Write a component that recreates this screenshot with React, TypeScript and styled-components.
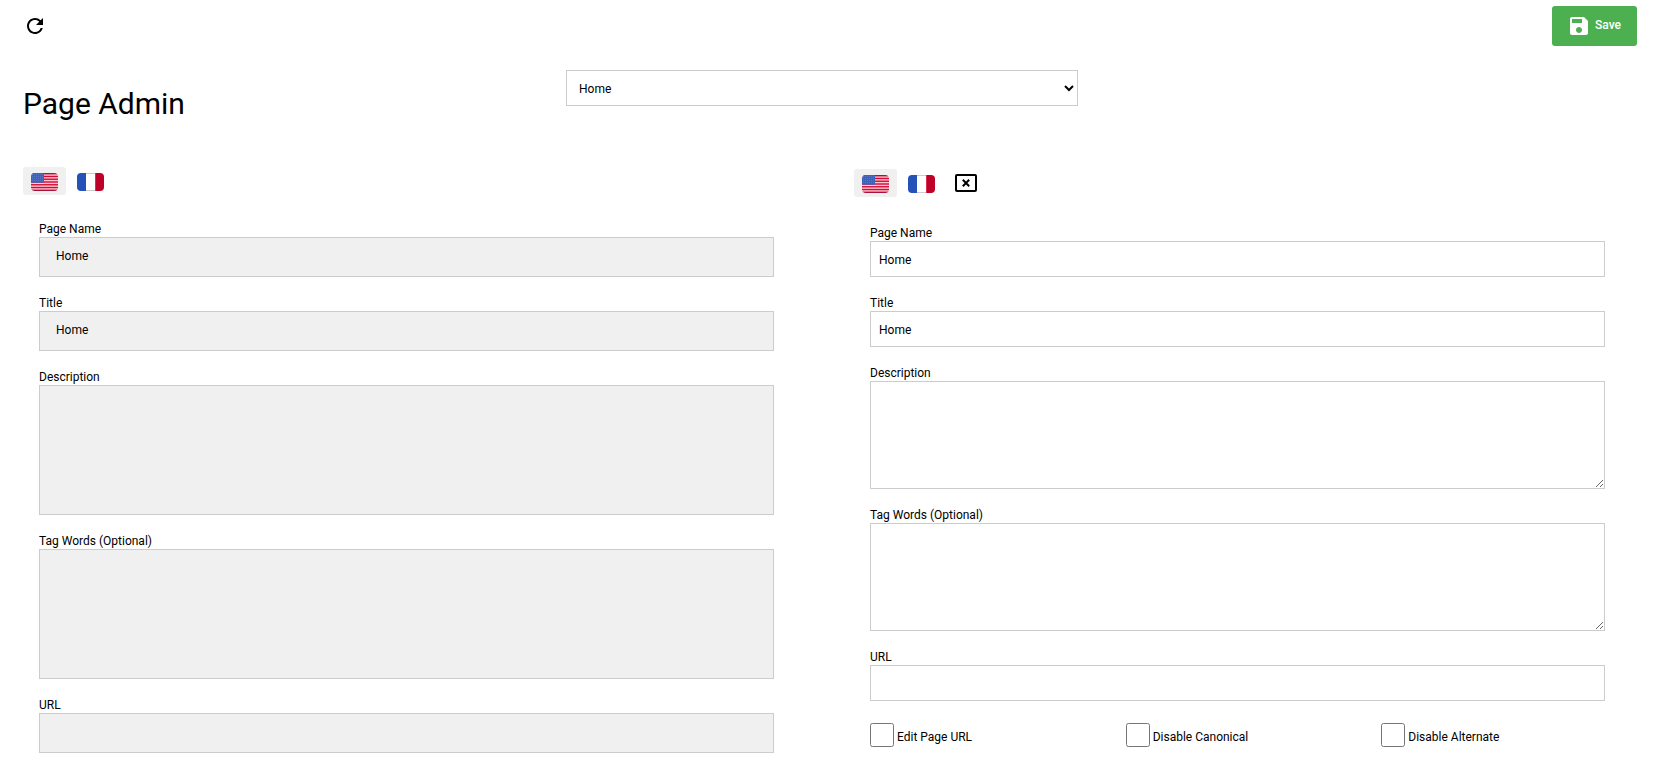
import * as React from "react";
import styled, { createGlobalStyle } from "styled-components";
import { MdRefresh, MdSave } from "react-icons/md";

const FIELDS = [
  { id: "name", label: "Page Name", value: "Home", multiline: false },
  { id: "title", label: "Title", value: "Home", multiline: false },
  { id: "description", label: "Description", value: "", multiline: true },
  { id: "tags", label: "Tag Words (Optional)", value: "", multiline: true },
  { id: "url", label: "URL", value: "", multiline: false },
];

const OPTIONS = [
  { id: "editUrl", label: "Edit Page URL" },
  { id: "canonical", label: "Disable Canonical" },
  { id: "alternate", label: "Disable Alternate" },
];

const FlagUS = () => (
  <svg width="27" height="18" viewBox="0 0 27 18" aria-hidden="true">
    <clipPath id="us">
      <rect width="27" height="18" rx="4" />
    </clipPath>
    <g clipPath="url(#us)">
      <rect width="27" height="18" fill="#ffc4cf" />
      {[0, 1, 2, 3, 4, 5, 6].map((i) => (
        <rect
          key={i}
          y={(i * 36) / 13}
          width="27"
          height={18 / 13}
          fill={i % 6 === 0 ? "#a8123a" : "#d00c34"}
        />
      ))}
      <rect width="13" height="9.7" fill="#3d62b8" />
      {[1.5, 3.5, 5.5, 7.5].map((y) => (
        <path
          key={y}
          d={`M1 ${y}H13`}
          stroke="#5f7fca"
          strokeWidth="0.7"
          strokeDasharray="1 1"
        />
      ))}
    </g>
  </svg>
);

const FlagFR = () => (
  <svg width="27" height="18" viewBox="0 0 27 18" aria-hidden="true">
    <clipPath id="fr">
      <rect width="27" height="18" rx="4" />
    </clipPath>
    <g clipPath="url(#fr)">
      <rect width="27" height="18" fill="#fff" />
      <path d="M9 .5H18M9 17.5H18" stroke="#ccc" />
      <rect width="9" height="18" fill="#2552b8" />
      <rect x="18" width="9" height="18" fill="#bf0029" />
      <path d="M18.5 0V18" stroke="#dc2f50" />
    </g>
  </svg>
);

const CloseBox = () => (
  <svg width="22" height="18" viewBox="0 0 22 18" aria-hidden="true">
    <rect
      x="1"
      y="1"
      width="20"
      height="16"
      rx="1"
      fill="none"
      stroke="#000"
      strokeWidth="2"
    />
    <path d="M7.8 5.8L14.2 12.2M14.2 5.8L7.8 12.2" stroke="#000" strokeWidth="2" />
  </svg>
);

const Languages = () => (
  <>
    <LangButton type="button" aria-label="English" $active>
      <FlagUS />
    </LangButton>
    <LangButton type="button" aria-label="French">
      <FlagFR />
    </LangButton>
  </>
);

const App: React.FunctionComponent = () => {
  return (
    <>
      <GlobalStyle />
      <Toolbar>
        <RefreshButton type="button" aria-label="Refresh">
          <MdRefresh size={24} />
        </RefreshButton>
        <SaveButton type="button">
          <MdSave size={24} />
          <SaveText>Save</SaveText>
        </SaveButton>
      </Toolbar>

      <Header>
        <Heading>Page Admin</Heading>
        <PageSelect aria-label="Page" defaultValue="Home">
          <option>Home</option>
        </PageSelect>
      </Header>

      <Columns>
        <section>
          <LangBar>
            <Languages />
          </LangBar>
          <Fields>
            {FIELDS.map(({ id, label, value, multiline }) => (
              <Field key={id}>
                <Label as="span" id={`current-${id}`}>
                  {label}
                </Label>
                <ReadOnly $tall={multiline} aria-labelledby={`current-${id}`}>
                  {value}
                </ReadOnly>
              </Field>
            ))}
          </Fields>
        </section>

        <section>
          <LangBar $editing>
            <Languages />
            <CloseButton type="button" aria-label="Close">
              <CloseBox />
            </CloseButton>
          </LangBar>
          <Fields>
            {FIELDS.map(({ id, label, value, multiline }) => (
              <Field key={id}>
                <Label htmlFor={id}>{label}</Label>
                {multiline ? (
                  <TextArea id={id} defaultValue={value} />
                ) : (
                  <TextInput id={id} type="text" defaultValue={value} />
                )}
              </Field>
            ))}
          </Fields>
          <Options>
            {OPTIONS.map(({ id, label }) => (
              <Option key={id}>
                <Checkbox id={id} type="checkbox" />
                <OptionLabel htmlFor={id}>{label}</OptionLabel>
              </Option>
            ))}
          </Options>
        </section>
      </Columns>
    </>
  );
};

const GlobalStyle = createGlobalStyle`
  *, *::before, *::after {
    box-sizing: border-box;
  }
  body {
    margin: 0;
    background: #fff;
    color: #000;
    font-family: Roboto, "Liberation Sans", sans-serif;
    font-size: 12px;
  }
  button, input, select, textarea {
    color: inherit;
    font: inherit;
  }
`;

const Toolbar = styled.div`
  display: flex;
  justify-content: space-between;
  align-items: flex-start;
  padding: 6px 17px 0 23px;
`;

const RefreshButton = styled.button`
  display: flex;
  padding: 8px 0;
  border: 0;
  background: none;
`;

const SaveButton = styled.button`
  display: flex;
  align-items: center;
  gap: 4px;
  height: 40px;
  padding: 0 16px 0 15px;
  border: 0;
  border-radius: 3px;
  background: #4caf50;
  color: #fff;
  font-weight: 500;
`;

const SaveText = styled.span`
  padding-bottom: 3px;
`;

const Header = styled.header`
  display: grid;
  grid-template-columns: 1fr 512px 1fr;
  align-items: start;
  padding: 24px 33px 0 23px;
`;

const Heading = styled.h1`
  margin: 14px 0 0;
  font-size: 30px;
  line-height: 40px;
  font-weight: 400;
`;

const PageSelect = styled.select`
  height: 36px;
  padding: 2px 8px 0;
  border: 1px solid #ccc;
  border-radius: 0;
  background: #fff;
`;

const Columns = styled.main`
  display: grid;
  grid-template-columns: 1fr 1fr;
  gap: 64px;
  padding: 43px 33px 16px 23px;
`;

const LangBar = styled.div<{ $editing?: boolean }>`
  display: flex;
  align-items: flex-start;
  gap: 3px;
  padding: ${(p) => (p.$editing ? "2px 0 28px" : "0 0 26px")};
`;

const LangButton = styled.button<{ $active?: boolean }>`
  display: flex;
  padding: 6px 8px 4px;
  border: 0;
  border-radius: 3px;
  background: ${(p) => (p.$active ? "#f0f0f0" : "none")};
`;

const CloseButton = styled.button`
  display: flex;
  margin-left: 6px;
  padding: 5px 3px;
  border: 0;
  background: none;
`;

const Fields = styled.div`
  display: flex;
  flex-direction: column;
  gap: 18px;
  padding: 0 16px;
`;

const Field = styled.div`
  display: flex;
  flex-direction: column;
`;

const Label = styled.label`
  line-height: 16px;
`;

const ReadOnly = styled.div<{ $tall: boolean }>`
  height: ${(p) => (p.$tall ? 130 : 40)}px;
  padding: 10px 16px;
  border: 1px solid #ccc;
  background: #f0f0f0;
  line-height: 16px;
`;

const TextInput = styled.input`
  height: 36px;
  padding: 2px 8px 0;
  border: 1px solid #ccc;
`;

const TextArea = styled.textarea`
  height: 108px;
  padding: 8px;
  border: 1px solid #ccc;
  resize: vertical;
`;

const Options = styled.div`
  display: grid;
  grid-template-columns: repeat(3, 1fr);
  padding-top: 22px;
`;

const Option = styled.div`
  display: flex;
  align-items: center;
  gap: 3px;
  padding-left: 16px;
`;

const Checkbox = styled.input`
  width: 24px;
  height: 24px;
  margin: 0;
`;

const OptionLabel = styled.label`
  padding-top: 3px;
`;

export default App;
